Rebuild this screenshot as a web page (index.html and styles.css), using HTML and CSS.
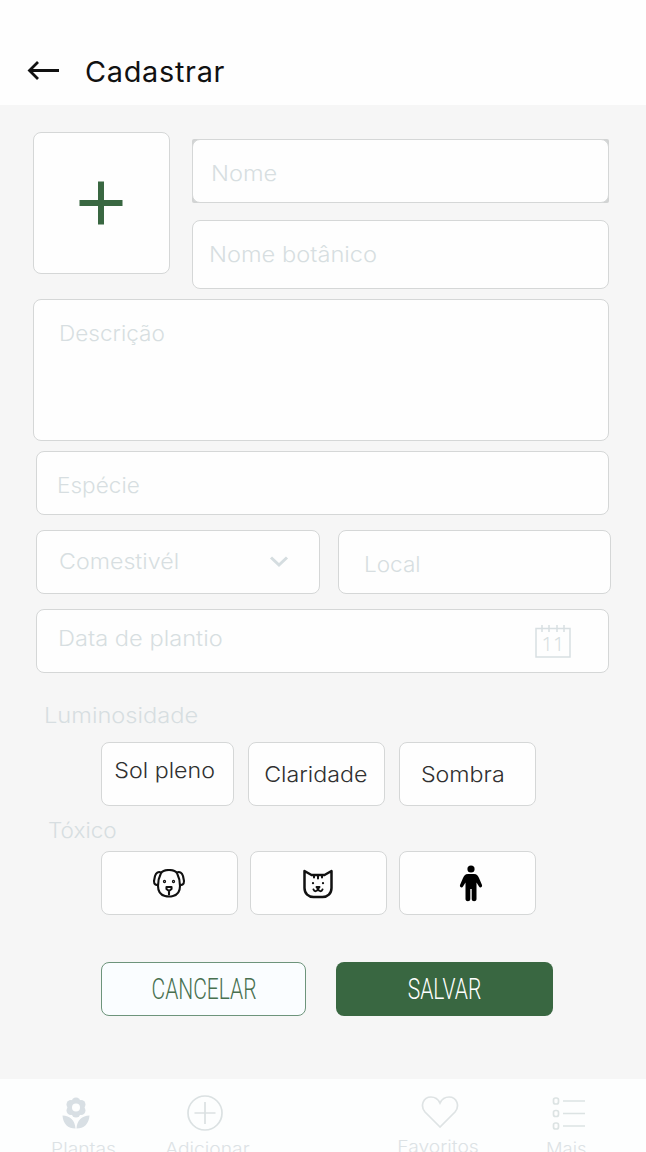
FILE: index.html
```html
<!DOCTYPE html>
<html lang="pt-BR">
<head>
<meta charset="utf-8">
<title>Cadastrar</title>
<link rel="stylesheet" href="styles.css">
</head>
<body>
<div class="app">
  <header class="top">
    <svg class="back" width="34" height="22" viewBox="0 0 34 22"><path d="M12 2 3.500 10.500l8.500 8.500M3.500 10.500H33" fill="none" stroke="#111" stroke-width="2.800"/></svg>
    <h1 class="title"><span class="w103">Cadastrar</span></h1>
  </header>
  <main class="form">
    <div class="intro">
      <button class="box photo"><svg width="44" height="44" viewBox="0 0 44 44"><path d="M22 .5v43M.5 22h43" stroke="#396741" stroke-width="6"/></svg></button>
      <div class="names">
        <div class="corners"><div class="box field name"><span class="w110">Nome</span></div></div>
        <div class="box field botanic"><span class="w110">Nome botânico</span></div>
      </div>
    </div>
    <div class="box field desc"><span class="w105">Descrição</span></div>
    <div class="box field species"><span class="w105">Espécie</span></div>
    <div class="pair">
      <div class="box field edible"><span class="w108">Comestivél</span>
        <svg width="20" height="14" viewBox="0 0 20 14"><path d="M2 2.500l8 7.500 8-7.500" fill="none" stroke="#d5dde0" stroke-width="3"/></svg></div>
      <div class="box field place"><span class="w105">Local</span></div>
    </div>
    <div class="box field date"><span class="w110">Data de plantio</span>
      <svg class="cal" width="36" height="36" viewBox="0 0 36 36"><path d="M1 5.500h34V34H1zM7 2v7M14 2v7M22 2v7M29 2v7" fill="none" stroke="#d8dfe2" stroke-width="1.500"/><text x="18" y="28" text-anchor="middle" class="day">11</text></svg></div>
    <div class="label lum"><span class="w110">Luminosidade</span></div>
    <div class="options">
      <button class="box option sun"><span class="w108">Sol pleno</span></button>
      <button class="box option clear"><span class="w108">Claridade</span></button>
      <button class="box option shade"><span class="w108">Sombra</span></button>
    </div>
    <div class="label tox"><span class="w105">Tóxico</span></div>
    <div class="options toxic">
      <button class="box option dog"><svg width="34" height="30" viewBox="0 0 34 30" fill="none" stroke="#111" stroke-width="2.100" stroke-linecap="round" stroke-linejoin="round"><path d="M9 4C12 0 22 0 25 4c2 4 3 8 3 13 0 6-3 9-7 10-3 .8-5 .8-8 0-4-1-7-4-7-10C6 12 7 8 9 4M9.500 3.500C6 2 4 4 3 7l-1 5c0 3.500 2 4.500 4 3.500M24.500 3.500c3.500-1.500 5.500.5 6.500 3.500l1 5c0 3.500-2 4.500-4 3.500"/><path d="M14.500 18h5v2L17 22l-2.500-2zM17 22v3.500"/><circle cx="12.500" cy="12.500" r=".6"/><circle cx="21.500" cy="12.500" r=".6"/></svg></button>
      <button class="box option cat"><svg width="34" height="30" viewBox="0 0 34 30" fill="none" stroke="#111" stroke-width="2.500" stroke-linecap="round" stroke-linejoin="round"><path d="M3.500 2l7 4h13l7-4v17c0 5.500-4 9-9 9h-9c-5 0-9-3.500-9-9z"/><path d="M13 6.500v2M17 6.500v3M21 6.500v2M15.500 18h3L17 20zM12.500 20.500c1 2.500 3.500 2 4.500-.5 1 2.500 3.500 3 4.500.5" stroke-width="2"/><path d="M12 14v.2M22 14v.2" stroke-width="2.200"/></svg></button>
      <button class="box option person"><svg width="24" height="37" viewBox="0 0 24 37" fill="#000"><circle cx="12" cy="4" r="3.600"/><path d="M9 9h6c3 0 4 2 5 4l3 7c.7 2-2 3.500-3 1.500l-2.500-4V34c0 3-4.800 3-4.800 0V24h-1.400v10c0 3-4.800 3-4.800 0V17.500L4 21.500c-1 2-3.700.5-3-1.500l3-7c1-2 2-4 5-4z"/></svg></button>
    </div>
    <div class="actions">
      <button class="cancel"><span>CANCELAR</span></button>
      <button class="save"><span>SALVAR</span></button>
    </div>
  </main>
  <nav class="nav">
    <a class="item plants"><svg width="28" height="34" viewBox="0 0 28 34"><g fill="#d8dfe4"><circle cx="14" cy="6" r="4.500"/><circle cx="14" cy="17" r="4.500"/><circle cx="9" cy="8.500" r="4.500"/><circle cx="19" cy="8.500" r="4.500"/><circle cx="9" cy="14.500" r="4.500"/><circle cx="19" cy="14.500" r="4.500"/><path d="M13.500 32.500C6 32.500 1 28 .5 19.500 8 20 13 24 13.500 32.500zM14.500 32.500c7.500 0 12.500-4.500 13-13C20 20 15 24 14.500 32.500z"/></g><circle cx="14" cy="11.500" r="4" fill="#fdfefe"/></svg><span>Plantas</span></a>
    <a class="item add"><svg width="36" height="36" viewBox="0 0 36 36" fill="none" stroke="#dbe1e2" stroke-width="1.700"><circle cx="18" cy="18" r="17"/><path d="M18 7v22M7.500 18h21"/></svg><span>Adicionar</span></a>
    <a class="item favs"><svg width="38" height="34" viewBox="0 0 38 34"><path d="M19 32 4 17C-1 11 2 2 10 2c4 0 7 2 9 6 2-4 5-6 9-6 8 0 11 9 6 15z" fill="none" stroke="#dee3e4" stroke-width="1.700"/></svg><span>Favoritos</span></a>
    <a class="item more"><svg width="34" height="34" viewBox="0 0 34 34" fill="none" stroke="#dce3e3" stroke-width="1.700"><rect x="1.500" y="2" width="5" height="6" rx="2"/><rect x="1.500" y="14.500" width="5" height="6" rx="2"/><rect x="1.500" y="27" width="5" height="6" rx="2"/><path d="M11 5h22M11 17.500h22M11 30h22"/></svg><span>Mais</span></a>
  </nav>
</div>
</body>
</html>
```
FILE: styles.css
```css
* { box-sizing: border-box; }
body { margin: 0; font-family: Inter, Roboto, sans-serif; font-weight: 300; }
svg { display: block; flex: none; }
button { font: inherit; padding: 0; color: #303030; }
.app { width: 646px; height: 1152px; overflow: hidden; background: #f6f6f6; display: flex; flex-direction: column; }
.top { height: 105px; flex: none; background: #fefefe; padding: 38px 0 0 26px; display: flex; align-items: center; gap: 25px; }
.back { margin-top: -1px; }
.title { margin: 0; font-size: 28px; line-height: 34px; font-weight: 400; color: #111; letter-spacing: .7px; }
.w103, .w105, .w108, .w110 { display: inline-block; transform-origin: left center; }
.w103 { transform: scaleX(1.03); }
.w105 { transform: scaleX(1.05); }
.w108 { transform: scaleX(1.08); }
.w110 { transform: scaleX(1.1); }
.option .w108 { transform-origin: center; }
.form { height: 974px; flex: none; padding: 27px 0 0 33px; }
.box { display: flex; background: #fefefe; border: 1px solid #d5d7d7; border-radius: 8px; }
.field, .label { font-size: 21.500px; line-height: 26px; color: #d7dee1; white-space: nowrap; }
.intro { display: flex; gap: 22px; }
.photo { width: 137px; height: 142px; padding-right: 2px; align-items: center; justify-content: center; }
.names { padding-top: 7px; width: 417px; }
.corners { background: #d2d4d4; border-radius: 2px; }
.name { height: 64px; padding: 20px 0 0 18px; }
.botanic { height: 69px; margin-top: 17px; padding: 20px 0 0 16px; }
.desc { width: 576px; height: 142px; margin-top: 10px; padding: 20px 0 0 25px; }
.species { width: 573px; height: 64px; margin: 10px 0 0 3px; padding: 20px 0 0 20px; }
.pair { display: flex; gap: 18px; margin: 15px 0 0 3px; }
.edible { width: 284px; height: 64px; padding: 17px 30px 0 22px; justify-content: space-between; }
.edible svg { margin-top: 7px; }
.place { width: 273px; height: 64px; padding: 20px 0 0 25px; }
.date { width: 573px; height: 64px; margin: 15px 0 0 3px; padding: 15px 37px 0 21px; justify-content: space-between; }
.cal { margin-top: -2px; }
.day { font: 300 20px "Noto Sans", sans-serif; fill: #d7dee1; }
.lum { height: 26px; margin: 29px 0 0 11px; }
.options { display: flex; margin: 14px 0 0 68px; }
.option { height: 64px; justify-content: center; font-size: 21.500px; line-height: 26px; white-space: nowrap; }
.sun { width: 133px; padding-top: 14px; margin-right: 14px; padding-right: 6px; }
.clear { width: 137px; padding-top: 18px; margin-right: 14px; padding-right: 2px; }
.shade { width: 137px; padding-top: 18px; padding-right: 10px; }
.tox { height: 26px; margin: 11px 0 0 15px; }
.toxic { margin-top: 8px; gap: 12px; }
.toxic .option { width: 137px; align-items: center; }
.toxic .dog { padding: 2px 2px 0 0; }
.toxic .cat { padding: 2px 1px 0 0; }
.toxic .person { padding-left: 6px; }
.actions { display: flex; gap: 30px; margin: 47px 0 0 68px; }
.cancel, .save { height: 54px; border-radius: 8px; font: 300 30px/52px Roboto, sans-serif; }
.cancel { width: 205px; border: 1px solid #6d947b; background: #fafdff; color: #48704f; }
.save { width: 217px; border: 0; background: #396741; color: #fff; }
.cancel span, .save span { display: inline-block; transform: scaleX(.7); }
.nav { height: 73px; flex: none; background: #fdfefe; display: flex; color: #dce2e5; font-size: 17.500px; line-height: 22px; }
.item { display: flex; flex-direction: column; align-items: center; flex: none; }
.item span { transform: scaleX(1.1); }
.plants { width: 100px; margin-left: 33px; padding-top: 17px; gap: 8px; }
.plants svg { margin-right: 14px; }
.add { width: 100px; margin-left: 24px; padding-top: 16px; gap: 7px; }
.add svg { margin-right: 4px; }
.favs { width: 100px; margin-left: 131px; padding-top: 16px; gap: 7px; }
.favs svg { margin-left: 4px; }
.more { width: 60px; margin-left: 48px; padding-top: 17px; gap: 8px; }
.more svg { margin-left: 6px; }
.more span { transform: scaleX(1.05); }
```
